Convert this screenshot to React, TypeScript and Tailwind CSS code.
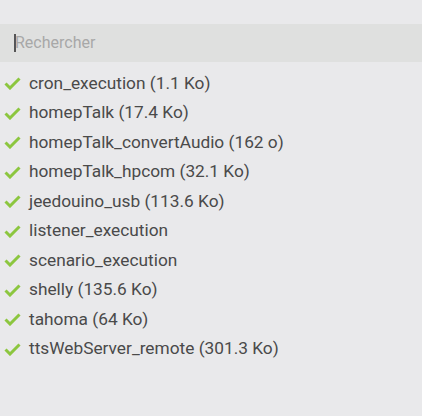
const files = [
  'cron_execution (1.1 Ko)',
  'homepTalk (17.4 Ko)',
  'homepTalk_convertAudio (162 o)',
  'homepTalk_hpcom (32.1 Ko)',
  'jeedouino_usb (113.6 Ko)',
  'listener_execution',
  'scenario_execution',
  'shelly (135.6 Ko)',
  'tahoma (64 Ko)',
  'ttsWebServer_remote (301.3 Ko)',
];

function Check() {
  return (
    <svg width="17" height="13" viewBox="0 0 17 13" className="shrink-0">
      <path d="M1.5 6.5 L6 11 L15.5 1.5" fill="none" stroke="#8cc63f" strokeWidth="3" />
    </svg>
  );
}

export default function App() {
  return (
    <div className="w-[422px] h-[416px] bg-[#e9e9eb] pt-6 font-['Roboto',sans-serif]">
      <div className="h-[38px] bg-[#dfe0df] flex items-center pl-[14px]">
        <span className="w-[2px] h-[18px] bg-[#555]" />
        <span className="text-[16px] text-[#a8a8a8] ml-[-1px]">Rechercher</span>
      </div>
      <ul className="pt-[7px]">
        {files.map((f) => (
          <li key={f} className="h-[29.5px] flex items-center pl-1 gap-2">
            <Check />
            <span className="text-[17.3px] text-[#4a4a4a]">{f}</span>
          </li>
        ))}
      </ul>
    </div>
  );
}
